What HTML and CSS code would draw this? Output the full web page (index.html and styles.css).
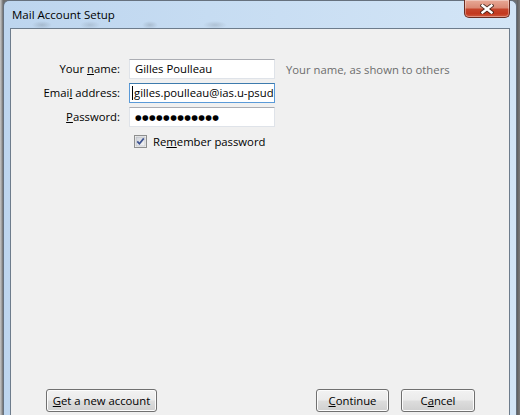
FILE: index.html
```html
<!DOCTYPE html>
<html>
<head>
<meta charset="utf-8">
<link rel="stylesheet" href="styles.css">
</head>
<body>
<div class="screen">
  <div class="bg-left"></div>
  <div class="window">
    <div class="titlebar">
      <span class="title">Mail Account Setup</span>
      <div class="close">
        <svg width="14" height="10" viewBox="0 0 14 10">
          <path d="M2.5 1.5 L11.5 8.5 M11.5 1.5 L2.5 8.5" stroke="#3b2018" stroke-width="4.2" stroke-linecap="square" fill="none" opacity="0.85"/>
          <path d="M2.5 1.5 L11.5 8.5 M11.5 1.5 L2.5 8.5" stroke="#ffffff" stroke-width="2.4" stroke-linecap="square" fill="none"/>
        </svg>
      </div>
    </div>
    <div class="client">
      <div class="form">
        <div class="lbl">Your <u>n</u>ame:</div>
        <div class="field">Gilles Poulleau</div>
        <div class="hint">Your name, as shown to others</div>

        <div class="lbl">Emai<u>l</u> address:</div>
        <div class="field focused"><span class="caret"></span>gilles.poulleau@ias.u-psud.fr</div>
        <div class="hint"></div>

        <div class="lbl"><u>P</u>assword:</div>
        <div class="field pw"><span class="dots">●●●●●●●●●●●●</span></div>
        <div class="hint"></div>

        <div class="check-row">
          <svg class="checkbox" width="13" height="13" viewBox="0 0 13 13">
            <defs>
              <linearGradient id="cbg" x1="0" y1="0" x2="1" y2="1">
                <stop offset="0" stop-color="#cdd1d8"/>
                <stop offset="1" stop-color="#f7f7f7"/>
              </linearGradient>
            </defs>
            <rect x="0.5" y="0.5" width="12" height="12" fill="#f4f4f4" stroke="#8e8f8f"/>
            <rect x="2" y="2" width="9" height="9" fill="url(#cbg)" stroke="#b2b6bd" stroke-width="0.6"/>
            <path d="M3.3 6.4 L5.4 8.8 L9.8 3.4" stroke="#3c5290" stroke-width="1.7" fill="none"/>
          </svg>
          <span class="check-label">Re<u>m</u>ember password</span>
        </div>
      </div>
      <div class="buttons">
        <button class="btn btn-new"><u>G</u>et a new account</button>
        <div class="spacer"></div>
        <button class="btn btn-continue"><u>C</u>ontinue</button>
        <button class="btn btn-cancel">C<u>a</u>ncel</button>
      </div>
    </div>
  </div>
  <div class="bg-right"></div>
</div>
</body>
</html>
```

FILE: styles.css
```css
html, body {
  margin: 0;
  padding: 0;
  background: #6f6f6f;
}

.screen {
  width: 520px;
  height: 415px;
  overflow: hidden;
  display: flex;
  font-family: "Open Sans", "Noto Sans", sans-serif;
  font-size: 11.3px;
  color: #000;
}

.bg-left {
  width: 3px;
  flex: none;
  background: linear-gradient(to right, #c9c9c9, #9a9a9a 60%, #6d6d6d);
}

.bg-right {
  width: 3px;
  flex: none;
  background: linear-gradient(to right, #5f5f5f, #7c7c7c);
}

.window {
  width: 514px;
  flex: none;
  box-sizing: border-box;
  border: 1px solid #66717e;
  border-bottom: none;
  border-radius: 6px 6px 0 0;
  padding: 0 6px;
  display: flex;
  flex-direction: column;
  background: linear-gradient(to right, #bdd5ee, #c6dcf2 40%, #d3e5f6 100%);
}

.titlebar {
  height: 27px;
  flex: none;
  display: flex;
  align-items: flex-start;
  background:
    radial-gradient(ellipse 10px 4px at 32px 24px, rgba(90,100,110,0.25), rgba(90,100,110,0)),
    radial-gradient(ellipse 10px 4px at 80px 24px, rgba(90,100,110,0.2), rgba(90,100,110,0)),
    radial-gradient(ellipse 8px 4px at 140px 24px, rgba(90,100,110,0.25), rgba(90,100,110,0)),
    radial-gradient(ellipse 12px 4px at 205px 24px, rgba(90,100,110,0.22), rgba(90,100,110,0));
}

.title {
  padding: 6px 0 0 2px;
  font-size: 11.5px;
  line-height: 16px;
  color: #000;
  flex: 1;
}

.close {
  width: 46px;
  height: 18px;
  margin-top: -1px;
  box-sizing: border-box;
  border: 1px solid #6a2c21;
  border-top: none;
  border-radius: 0 0 5px 5px;
  background: linear-gradient(#e7a997 0%, #db8a75 45%, #c5442b 55%, #c3391f 80%, #d0593e 100%);
  box-shadow: inset 0 0 0 1px rgba(255,255,255,0.35);
  display: flex;
  align-items: center;
  justify-content: center;
}

.client {
  flex: 1;
  box-sizing: border-box;
  background: #f0f0f0;
  border: 1px solid #6d7c8c;
  border-bottom: none;
  display: flex;
  flex-direction: column;
  padding-bottom: 3px;
}

.form {
  display: grid;
  grid-template-columns: 109px 146px auto;
  column-gap: 9px;
  row-gap: 4px;
  padding-top: 30px;
  align-items: center;
}

.lbl {
  text-align: right;
  line-height: 20px;
  white-space: nowrap;
}

.field {
  height: 20px;
  box-sizing: border-box;
  background: #fff;
  border: 1px solid #dfe3e9;
  border-top-color: #abadb3;
  padding: 0 0 0 5px;
  line-height: 18px;
  white-space: nowrap;
  overflow: hidden;
}

.field.focused {
  border-color: #5a9ad8;
  border-top-color: #3d7bad;
  padding-left: 2px;
}

.caret {
  display: inline-block;
  width: 1px;
  height: 14px;
  background: #000;
  vertical-align: -3px;
  margin-right: 1px;
}

.dots {
  font-family: "DejaVu Sans", sans-serif;
  font-size: 7.6px;
  letter-spacing: 0.4px;
  vertical-align: 1px;
}

.hint {
  color: #6d6d6d;
  padding-left: 2px;
  white-space: nowrap;
}

.check-row {
  grid-column: 2 / 4;
  display: flex;
  align-items: center;
  height: 20px;
  padding-left: 5px;
}

.checkbox {
  flex: none;
  margin-right: 6px;
}

.buttons {
  margin-top: auto;
  display: flex;
  padding: 0 34px 0 35px;
  gap: 12px;
}

.spacer {
  flex: 1;
}

.btn {
  height: 23px;
  box-sizing: border-box;
  border: 1px solid #707070;
  border-radius: 3px;
  background: linear-gradient(#f2f2f2 0%, #ebebeb 48%, #dddddd 52%, #cfcfcf 100%);
  box-shadow: inset 0 0 0 1px #fcfcfc;
  font-family: inherit;
  font-size: 11.3px;
  color: #000;
  padding: 0;
  line-height: 20px;
  text-align: center;
}

.btn-new { width: 111px; }
.btn-continue { width: 73px; }
.btn-cancel { width: 74px; }
```
